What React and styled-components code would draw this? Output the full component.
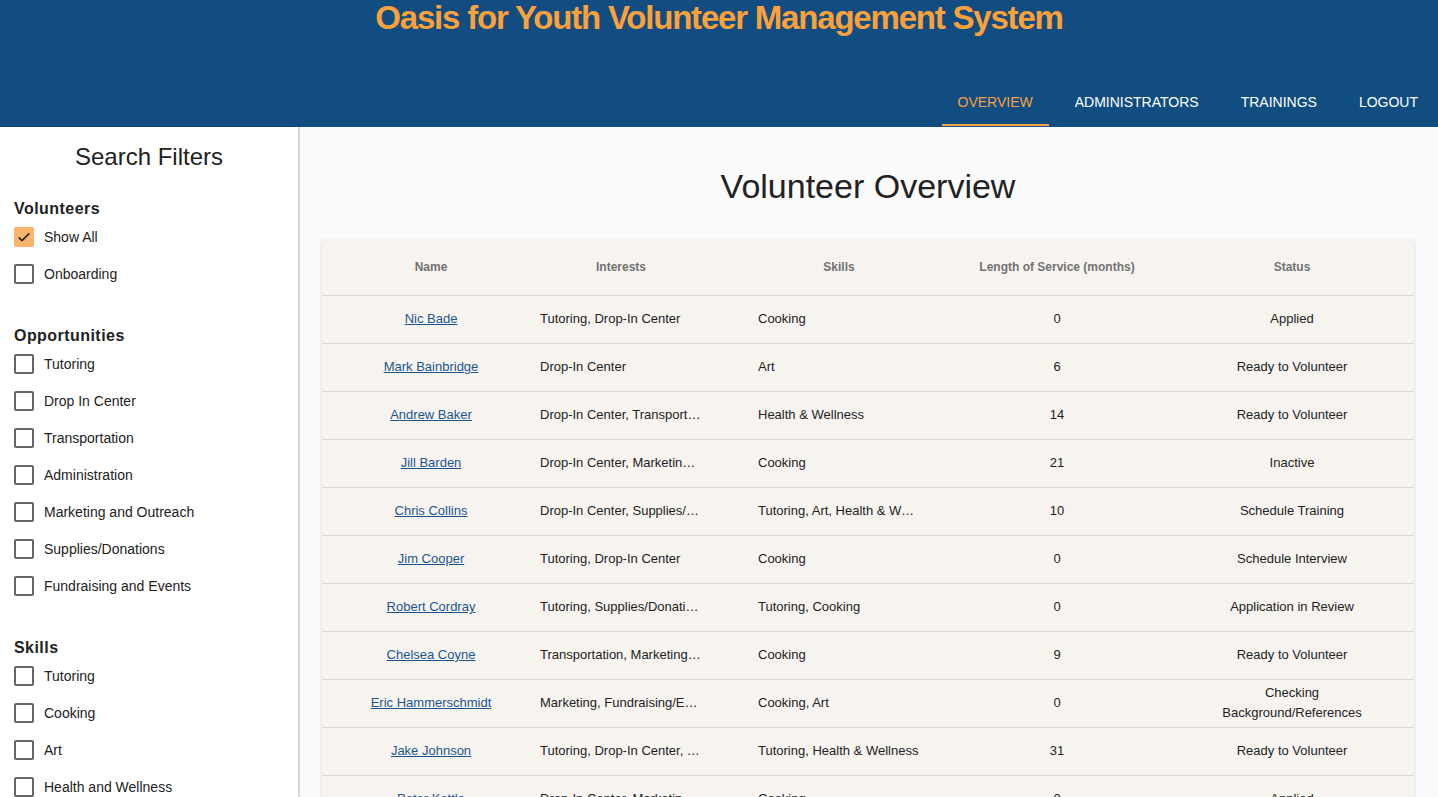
import React from "react";
import styled, { createGlobalStyle } from "styled-components";

const Global = createGlobalStyle`
  html, body { margin: 0; padding: 0; overflow: hidden; }
  body { font-family: "Liberation Sans", Arial, sans-serif; background: #fafafa; color: #222; }
  * { box-sizing: border-box; }
`;

const Page = styled.div`
  height: 100vh;
  display: flex;
  flex-direction: column;
  overflow: hidden;
`;

const Header = styled.header`
  height: 127px;
  flex: none;
  background: #114d80;
  display: flex;
  flex-direction: column;
  justify-content: space-between;
`;

const Title = styled.h1`
  margin: 0;
  text-align: center;
  font-size: 33px;
  line-height: 36px;
  font-weight: 700;
  letter-spacing: -1.2px;
  color: #fba03a;
`;

const Tabs = styled.nav`
  display: flex;
  justify-content: flex-end;
  gap: 10px;
  padding-right: 4px;
  margin-bottom: 1px;
`;

const Tab = styled.a`
  height: 47px;
  padding: 0 16px;
  display: flex;
  align-items: center;
  justify-content: center;
  font-size: 14px;
  text-transform: uppercase;
  color: ${(p) => (p.$active ? "#f7a046" : "#ffffff")};
  border-bottom: 2px solid ${(p) => (p.$active ? "#f7a046" : "transparent")};
  cursor: pointer;
`;

const Body = styled.div`
  flex: 1;
  display: flex;
  min-height: 0;
`;

const Sidebar = styled.aside`
  width: 298px;
  flex: none;
  background: #fff;
  box-shadow: 1px 0 2px rgba(0, 0, 0, 0.18), 2px 0 1px rgba(0, 0, 0, 0.06);
  padding: 14px 0 0 14px;
  overflow: hidden;
  position: relative;
  z-index: 1;
`;

const SideTitle = styled.h2`
  margin: 0 0 24px -14px;
  text-align: center;
  font-size: 24px;
  line-height: 32px;
  font-weight: 400;
  color: #222;
`;

const Section = styled.section`
  margin-bottom: 32px;
`;

const SectionHeading = styled.h3`
  margin: 0 0 -1px;
  padding-top: 2px;
  font-size: 16px;
  line-height: 20px;
  font-weight: 700;
  letter-spacing: 0.45px;
  color: #222;
`;

const Option = styled.label`
  height: 37px;
  display: flex;
  align-items: center;
  gap: 10px;
  font-size: 14px;
  color: #222;
  cursor: pointer;
`;

const Box = styled.span`
  width: 20px;
  height: 20px;
  border-radius: 2px;
  display: flex;
  align-items: center;
  justify-content: center;
  background: ${(p) => (p.$checked ? "#fbb46c" : "transparent")};
  border: ${(p) => (p.$checked ? "none" : "2px solid #666")};
`;

const Main = styled.main`
  flex: 1;
  padding: 39px 24px 0 24px;
  overflow: hidden;
`;

const PageTitle = styled.h2`
  margin: 0 0 33px;
  text-align: center;
  font-size: 34px;
  line-height: 40px;
  font-weight: 400;
  color: #222;
`;

const Card = styled.div`
  background: #f7f4f0;
  border-radius: 4px;
  box-shadow: 0 1px 3px rgba(0, 0, 0, 0.2), 0 1px 1px rgba(0, 0, 0, 0.08);
`;

const Row = styled.div`
  display: grid;
  grid-template-columns: 218px 218px 162px 274px 196px;
  align-items: center;
  min-height: ${(p) => (p.$head ? "57px" : "48px")};
  padding-bottom: ${(p) => (p.$head ? "0" : "1px")};
  border-bottom: 1px solid #dcd9d5;
`;

const Cell = styled.div`
  padding: ${(p) => (p.$left ? "0 56px 0 0" : "0 16px")};
  text-align: ${(p) => (p.$left && !p.$head ? "left" : "center")};
  font-size: ${(p) => (p.$head ? "12px" : "13px")};
  font-weight: ${(p) => (p.$head ? 700 : 400)};
  color: ${(p) => (p.$head ? "#727272" : "#222")};
  line-height: 20px;
  white-space: ${(p) => (p.$wrap ? "normal" : "nowrap")};
  overflow: hidden;
  text-overflow: ellipsis;
`;

const SkillCell = styled(Cell)`
  padding: 0;
`;

const NameLink = styled.a`
  color: #1b5590;
  text-decoration: underline;
  cursor: pointer;
`;

const Check = () => (
  <svg width="16" height="16" viewBox="0 0 24 24">
    <path d="M4 12.5l5 5L20 6.5" fill="none" stroke="#222" strokeWidth="2.4" />
  </svg>
);

const filters = [
  { title: "Volunteers", items: [["Show All", true], ["Onboarding", false]] },
  {
    title: "Opportunities",
    items: [
      ["Tutoring"],
      ["Drop In Center"],
      ["Transportation"],
      ["Administration"],
      ["Marketing and Outreach"],
      ["Supplies/Donations"],
      ["Fundraising and Events"],
    ],
  },
  {
    title: "Skills",
    items: [["Tutoring"], ["Cooking"], ["Art"], ["Health and Wellness"], ["Transportation"]],
  },
];

const rows = [
  ["Nic Bade", "Tutoring, Drop-In Center", "Cooking", "0", "Applied"],
  ["Mark Bainbridge", "Drop-In Center", "Art", "6", "Ready to Volunteer"],
  ["Andrew Baker", "Drop-In Center, Transportation", "Health & Wellness", "14", "Ready to Volunteer"],
  ["Jill Barden", "Drop-In Center, Marketing/Outreach", "Cooking", "21", "Inactive"],
  ["Chris Collins", "Drop-In Center, Supplies/Donations", "Tutoring, Art, Health & Wellness", "10", "Schedule Training"],
  ["Jim Cooper", "Tutoring, Drop-In Center", "Cooking", "0", "Schedule Interview"],
  ["Robert Cordray", "Tutoring, Supplies/Donations", "Tutoring, Cooking", "0", "Application in Review"],
  ["Chelsea Coyne", "Transportation, Marketing/Outreach", "Cooking", "9", "Ready to Volunteer"],
  ["Eric Hammerschmidt", "Marketing, Fundraising/Events", "Cooking, Art", "0", "Checking Background/References"],
  ["Jake Johnson", "Tutoring, Drop-In Center, Transportation", "Tutoring, Health & Wellness", "31", "Ready to Volunteer"],
  ["Peter Kettle", "Drop-In Center, Marketing/Outreach", "Cooking", "0", "Applied"],
];

export default function App() {
  return (
    <Page>
      <Global />
      <Header>
        <Title>Oasis for Youth Volunteer Management System</Title>
        <Tabs>
          <Tab $active>Overview</Tab>
          <Tab>Administrators</Tab>
          <Tab>Trainings</Tab>
          <Tab>Logout</Tab>
        </Tabs>
      </Header>
      <Body>
        <Sidebar>
          <SideTitle>Search Filters</SideTitle>
          {filters.map((s) => (
            <Section key={s.title}>
              <SectionHeading>{s.title}</SectionHeading>
              {s.items.map(([label, checked]) => (
                <Option key={label}>
                  <Box $checked={checked}>{checked && <Check />}</Box>
                  {label}
                </Option>
              ))}
            </Section>
          ))}
        </Sidebar>
        <Main>
          <PageTitle>Volunteer Overview</PageTitle>
          <Card>
            <Row $head>
              <Cell $head>Name</Cell>
              <Cell $head $left>Interests</Cell>
              <SkillCell $head>Skills</SkillCell>
              <Cell $head>Length of Service (months)</Cell>
              <Cell $head>Status</Cell>
            </Row>
            {rows.map((r) => (
              <Row key={r[0]}>
                <Cell><NameLink>{r[0]}</NameLink></Cell>
                <Cell $left>{r[1]}</Cell>
                <SkillCell $left>{r[2]}</SkillCell>
                <Cell>{r[3]}</Cell>
                <Cell $wrap>{r[4]}</Cell>
              </Row>
            ))}
          </Card>
        </Main>
      </Body>
    </Page>
  );
}
